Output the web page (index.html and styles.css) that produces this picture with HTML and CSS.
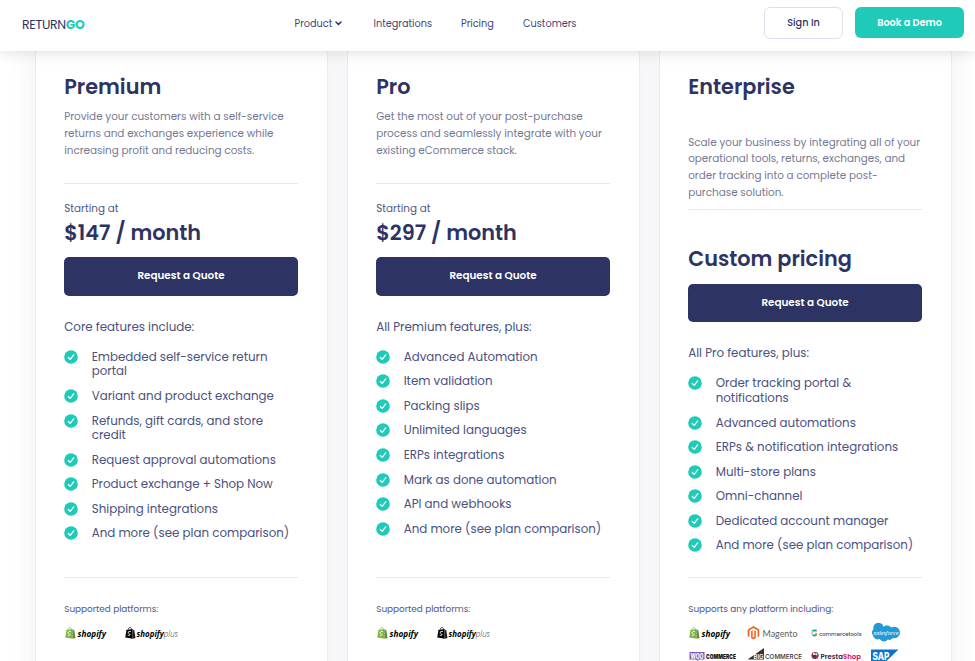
FILE: index.html
```html
<!DOCTYPE html>
<html lang="en">
<head>
    <meta charset="UTF-8">
    <meta name="viewport" content="width=device-width, initial-scale=1.0">
    <title>ReturnGO Pricing</title>
    <link rel="stylesheet" href="styles.css">
</head>
<body>
    <!-- shared icons -->
    <svg class="sprite" width="0" height="0">
        <symbol id="check" viewBox="0 0 14 14">
            <circle cx="7" cy="7" r="6.8" fill="#1fcbb8"/>
            <path d="M4.3 7.5l1.9 1.9 3.5-4.6" fill="none" stroke="#fff" stroke-width="1.2" stroke-linecap="round" stroke-linejoin="round"/>
        </symbol>
        <symbol id="bag" viewBox="0 0 11 12">
            <path d="M1.4 3L7.3 2l.4 9.8L.3 10.6z" fill="currentColor"/>
            <path d="M7.3 2l1 .9 1 .3 1.2 7.8-2.8.8z"/>
            <path d="M3 3.2C3.2 1.6 4.2.4 5.2.4c.9 0 1.3.9 1.4 2" fill="none" stroke="currentColor" stroke-width=".7"/>
            <path d="M5.8 4.7c-1.3-.6-2.6-.2-2.6.8s1.7 1.1 1.7 2.1-1.3 1.1-2.2.4" fill="none" stroke="#fff" stroke-width="1"/>
        </symbol>
    </svg>

    <header class="header">
        <a class="logo">RETURN<b>GO</b></a>
        <nav class="nav">
            <a class="nav-product">Product
                <svg width="7" height="5" viewBox="0 0 7 5"><path d="M1 1l2.5 2.5L6 1" fill="none" stroke="#2d3363" stroke-width="1.5" stroke-linecap="round"/></svg>
            </a>
            <a class="nav-integrations">Integrations</a>
            <a class="nav-pricing">Pricing</a>
            <a>Customers</a>
        </nav>
        <div class="actions">
            <button class="sign-in">Sign In</button>
            <button class="demo">Book a Demo</button>
        </div>
    </header>

    <main class="plans">
        <section class="plan">
            <h2 class="title">Premium</h2>
            <p class="description">Provide your customers with a self-service<br>returns and exchanges experience while<br>increasing profit and reducing costs.</p>
            <div class="price-box">
                <p class="starting">Starting at</p>
                <p class="price">$147 / month</p>
            </div>
            <button class="quote">Request a Quote</button>
            <p class="features-title">Core features include:</p>
            <ul class="features">
                <li><svg><use href="#check"/></svg><span>Embedded self-service return<br>portal</span></li>
                <li><svg><use href="#check"/></svg><span>Variant and product exchange</span></li>
                <li><svg><use href="#check"/></svg><span>Refunds, gift cards, and store<br>credit</span></li>
                <li><svg><use href="#check"/></svg><span>Request approval automations</span></li>
                <li><svg><use href="#check"/></svg><span>Product exchange + Shop Now</span></li>
                <li><svg><use href="#check"/></svg><span>Shipping integrations</span></li>
                <li><svg><use href="#check"/></svg><span>And more (see plan comparison)</span></li>
            </ul>
            <div class="platforms">
                <p class="platforms-title">Supported platforms:</p>
                <div class="logos">
                    <svg width="42" height="14">
                        <use href="#bag" x="0" y="1" width="11" height="12" class="green"/>
                        <text x="12.5" y="10.5" textLength="28.5" lengthAdjust="spacingAndGlyphs" class="logo-shop">shopify</text>
                    </svg>
                    <svg width="55" height="14">
                        <use href="#bag" x="0" y="1" width="11" height="12" class="black"/>
                        <text x="11.5" y="10.5" textLength="41.5" lengthAdjust="spacingAndGlyphs" class="logo-shop">shopify<tspan class="logo-plus">plus</tspan></text>
                    </svg>
                </div>
            </div>
        </section>

        <section class="plan">
            <h2 class="title">Pro</h2>
            <p class="description">Get the most out of your post-purchase<br>process and seamlessly integrate with your<br>existing eCommerce stack.</p>
            <div class="price-box">
                <p class="starting">Starting at</p>
                <p class="price">$297 / month</p>
            </div>
            <button class="quote">Request a Quote</button>
            <p class="features-title">All Premium features, plus:</p>
            <ul class="features">
                <li><svg><use href="#check"/></svg><span>Advanced Automation</span></li>
                <li><svg><use href="#check"/></svg><span>Item validation</span></li>
                <li><svg><use href="#check"/></svg><span>Packing slips</span></li>
                <li><svg><use href="#check"/></svg><span>Unlimited languages</span></li>
                <li><svg><use href="#check"/></svg><span>ERPs integrations</span></li>
                <li><svg><use href="#check"/></svg><span>Mark as done automation</span></li>
                <li><svg><use href="#check"/></svg><span>API and webhooks</span></li>
                <li><svg><use href="#check"/></svg><span>And more (see plan comparison)</span></li>
            </ul>
            <div class="platforms">
                <p class="platforms-title">Supported platforms:</p>
                <div class="logos">
                    <svg width="42" height="14">
                        <use href="#bag" x="0" y="1" width="11" height="12" class="green"/>
                        <text x="12.5" y="10.5" textLength="28.5" lengthAdjust="spacingAndGlyphs" class="logo-shop">shopify</text>
                    </svg>
                    <svg width="55" height="14">
                        <use href="#bag" x="0" y="1" width="11" height="12" class="black"/>
                        <text x="11.5" y="10.5" textLength="41.5" lengthAdjust="spacingAndGlyphs" class="logo-shop">shopify<tspan class="logo-plus">plus</tspan></text>
                    </svg>
                </div>
            </div>
        </section>

        <section class="plan enterprise">
            <h2 class="title">Enterprise</h2>
            <p class="description">Scale your business by integrating all of your<br>operational tools, returns, exchanges, and<br>order tracking into a complete post-<br>purchase solution.</p>
            <div class="price-box">
                <p class="price">Custom pricing</p>
            </div>
            <button class="quote">Request a Quote</button>
            <p class="features-title">All Pro features, plus:</p>
            <ul class="features">
                <li><svg><use href="#check"/></svg><span>Order tracking portal &amp;<br>notifications</span></li>
                <li><svg><use href="#check"/></svg><span>Advanced automations</span></li>
                <li><svg><use href="#check"/></svg><span>ERPs &amp; notification integrations</span></li>
                <li><svg><use href="#check"/></svg><span>Multi-store plans</span></li>
                <li><svg><use href="#check"/></svg><span>Omni-channel</span></li>
                <li><svg><use href="#check"/></svg><span>Dedicated account manager</span></li>
                <li><svg><use href="#check"/></svg><span>And more (see plan comparison)</span></li>
            </ul>
            <div class="platforms">
                <p class="platforms-title">Supports any platform including:</p>
                <div class="logo-grid">
                    <svg width="42" height="14">
                        <use href="#bag" x="0" y="1" width="11" height="12" class="green"/>
                        <text x="12.5" y="10.5" textLength="28.5" lengthAdjust="spacingAndGlyphs" class="logo-shop">shopify</text>
                    </svg>
                    <svg width="52" height="16" viewBox="0 0 52 16">
                        <path d="M6.5 1l5.8 3.4v6.8l-1.7 1V5.4L6.5 3 2.4 5.4v6.8l-1.7-1V4.4z" fill="#f26322"/>
                        <path d="M4.1 6.3l1.6-1v6.8l.8.5.8-.5V5.3l1.6 1v6.8L6.5 14.6l-2.4-1.5z" fill="#f26322"/>
                        <text x="15.5" y="11.5" textLength="35" lengthAdjust="spacingAndGlyphs" class="logo-magento">Magento</text>
                    </svg>
                    <svg width="52" height="14" viewBox="0 0 52 14">
                        <path d="M.5 5.5C.8 3.6 2 3.300 5.600 3.500l.2 2z" fill="#16a99c"/>
                        <path d="M.3 6h1.500v2.500H.5z" fill="#f6b846"/>
                        <path d="M1 8.500h4.800l-.2 1.800c-2.600.4-4 .1-4.600-1.800z" fill="#16a99c"/>
                        <path d="M4.300 7h1.600v1.800H4.300z" fill="#e6663c"/>
                        <text x="8" y="9.5" textLength="42.5" lengthAdjust="spacingAndGlyphs" class="logo-ct">commercetools</text>
                    </svg>
                    <svg width="30" height="18" viewBox="0 0 30 18">
                        <path d="M12.5 2.7a5.300 5.300 0 0 1 7.600.8 6 6 0 0 1 8.900 5.300 5.700 5.700 0 0 1-7 5.300 4.400 4.400 0 0 1-5.200 1.400 5 5 0 0 1-8.300-.7A4.400 4.400 0 0 1 2 11.300a4.300 4.300 0 0 1 .4-6.100A5 5 0 0 1 12.500 2.700z" fill="#2399d6"/>
                        <text x="2.5" y="10.8" textLength="25" lengthAdjust="spacingAndGlyphs" class="logo-sf">salesforce</text>
                    </svg>
                    <svg width="48" height="14" viewBox="0 0 48 14">
                        <path d="M1 3h14.500v7.500H9l.7 1.600-3-1.600H.5V3.500z" fill="#7f54b3"/>
                        <text x="1.5" y="9.5" textLength="13" lengthAdjust="spacingAndGlyphs" class="logo-woo">WOO</text>
                        <text x="17" y="9.5" textLength="30" lengthAdjust="spacingAndGlyphs" class="logo-commerce">COMMERCE</text>
                    </svg>
                    <svg width="56" height="14" viewBox="0 0 56 14">
                        <path d="M.5 10.5L17-1v11.500z" fill="#343440"/>
                        <text x="6.5" y="9.5" textLength="10" lengthAdjust="spacingAndGlyphs" class="logo-big">BIG</text>
                        <text x="18" y="9.5" textLength="37" lengthAdjust="spacingAndGlyphs" class="logo-bc">COMMERCE</text>
                    </svg>
                    <svg width="52" height="14" viewBox="0 0 52 14">
                        <circle cx="4" cy="6.5" r="3.6" fill="#a4315f"/>
                        <path d="M4 2.9a3.600 3.600 0 0 1 3.600 3.600H4z" fill="#3b6f8f"/>
                        <path d="M1 6h4l-.5 4.200C2.500 9.500 1.500 8 1 6z" fill="#4b3546"/>
                        <circle cx="3" cy="5" r="1.1" fill="#fff"/><circle cx="5.3" cy="5.3" r="1" fill="#fff"/>
                        <text x="9.5" y="9.5" textLength="40.5" lengthAdjust="spacingAndGlyphs" class="logo-presta">Presta<tspan fill="#df0067">Shop</tspan></text>
                    </svg>
                    <svg width="28" height="14" viewBox="0 0 28 14">
                        <path d="M0 .5h27.500L14 13.500H0z" fill="#0b74d1"/>
                        <text x="1.5" y="10.5" textLength="17" lengthAdjust="spacingAndGlyphs" class="logo-sap">SAP</text>
                    </svg>
                </div>
            </div>
        </section>
    </main>
</body>
</html>
```
FILE: styles.css
```css
* {
    box-sizing: border-box;
}
body {
    margin: 0;
    height: 661px;
    overflow: hidden;
    background: #fff;
    color: #2d3363;
    font-family: Poppins, Inter, sans-serif;
}
h2, p, ul {
    margin: 0;
    padding: 0;
}
button {
    font-family: inherit;
    cursor: pointer;
}
svg {
    overflow: visible;
}
.sprite {
    display: block;
}
.header {
    position: relative;
    z-index: 2;
    display: flex;
    height: 50.5px;
    padding: 0 11px 0 22px;
    background: #fff;
    box-shadow: 0 1px 14px rgba(0, 0, 0, 0.14);
}
.logo {
    width: 272.5px;
    padding-top: 16px;
    font-size: 12.5px;
    line-height: 17px;
    letter-spacing: -0.3px;
}
.logo b {
    color: #1fcbb8;
    font-weight: 700;
}
.nav {
    display: flex;
    flex: 1;
    padding-top: 16px;
    color: #3f4572;
    font-size: 9.75px;
    line-height: 16px;
}
.nav-product {
    width: 79px;
}
.nav-product svg {
    margin-bottom: 1px;
}
.nav-integrations {
    width: 87.5px;
}
.nav-pricing {
    width: 62px;
}
.actions {
    display: flex;
    gap: 12px;
    padding-top: 7px;
}
.actions button {
    padding: 0;
    border-radius: 6px;
    font-size: 9.7px;
}
.sign-in {
    width: 79px;
    height: 32px;
    border: 1px solid #dedfee;
    background: #fff;
    color: #2d3363;
    font-weight: 500;
}
.demo {
    width: 109px;
    height: 31px;
    border: none;
    background: #1fcbb8;
    color: #fff;
    font-weight: 600;
}
.plans {
    display: grid;
    grid-template-columns: repeat(3, 293px);
    gap: 19px;
    margin-top: -3.5px;
    padding-left: 34.5px;
}
.plan {
    height: 660px;
    padding: 23px 28.7px 0;
    border: 1px solid #e9edf7;
    border-radius: 8px;
    background: #fff;
    box-shadow: 0 0 28px rgba(45, 51, 99, 0.08);
}
.title, .price {
    font-size: 20.8px;
    line-height: 32px;
    font-weight: 600;
}
.description {
    height: 80.5px;
    padding-top: 6.4px;
    border-bottom: 1px solid #e4e8f0;
    color: #747894;
    font-size: 10.4px;
    line-height: 16.7px;
    white-space: nowrap;
}
.price-box {
    height: 73.5px;
    padding-top: 17.5px;
}
.starting {
    color: #515681;
    font-size: 10.4px;
    line-height: 16px;
}
.quote {
    display: block;
    width: 100%;
    height: 38.5px;
    border: none;
    border-radius: 5px;
    background: #2d3363;
    color: #fff;
    font-size: 10.4px;
    font-weight: 600;
}
.features-title {
    margin-top: 22.4px;
    color: #4b5180;
    font-size: 11.85px;
    line-height: 18px;
}
.features {
    height: 227px;
    padding-top: 14px;
    color: #4b5180;
    font-size: 11.85px;
    line-height: 14.6px;
    list-style: none;
    white-space: nowrap;
}
.features li {
    display: flex;
    gap: 13.5px;
    margin-bottom: 9.95px;
}
.features svg {
    width: 14px;
    height: 14px;
}
.platforms {
    margin-top: 14px;
    padding-top: 23px;
    border-top: 1px solid #e4e8f0;
}
.platforms-title {
    color: #515681;
    font-size: 8.9px;
    line-height: 16px;
}
.logos {
    display: flex;
    gap: 18px;
    padding: 9.5px 0 0 0.5px;
}
.logo-grid {
    display: grid;
    grid-template-columns: 58.5px 63.5px 60px 32px;
    grid-template-rows: 18px 14px;
    align-items: center;
    row-gap: 6.5px;
    padding: 7.5px 0 0 0.5px;
}

/* enterprise plan has a longer description and no starting label */
.enterprise .description {
    height: 107px;
    padding-top: 31.5px;
}
.enterprise .price-box {
    padding-top: 33px;
}
.enterprise .features {
    height: 200.5px;
}

/* platform logos */
.green {
    color: #83b541;
    fill: #5e8e3e;
}
.black {
    color: #000;
    fill: #222;
}
.logo-shop {
    font: italic 700 9px "Open Sans", sans-serif;
    fill: #000;
}
.logo-plus {
    font-weight: 300;
    fill: #333;
}
.logo-magento {
    font: 10px Lato, sans-serif;
    fill: #5c5c60;
}
.logo-ct {
    font: 500 6px Poppins, Inter, sans-serif;
    fill: #434d5d;
}
.logo-sf {
    font: italic 6px "Open Sans", sans-serif;
    fill: #fff;
}
.logo-woo {
    font: 800 7.5px Inter, sans-serif;
    fill: #fff;
}
.logo-commerce {
    font: 900 6.5px Inter, sans-serif;
    fill: #111;
}
.logo-big {
    font: 600 6.5px Inter, sans-serif;
    fill: #fff;
}
.logo-bc {
    font: 500 6.5px Inter, sans-serif;
    fill: #343440;
}
.logo-presta {
    font: 600 7px Poppins, Inter, sans-serif;
    fill: #35263d;
}
.logo-sap {
    font: 800 10px Inter, sans-serif;
    fill: #fff;
}
```
